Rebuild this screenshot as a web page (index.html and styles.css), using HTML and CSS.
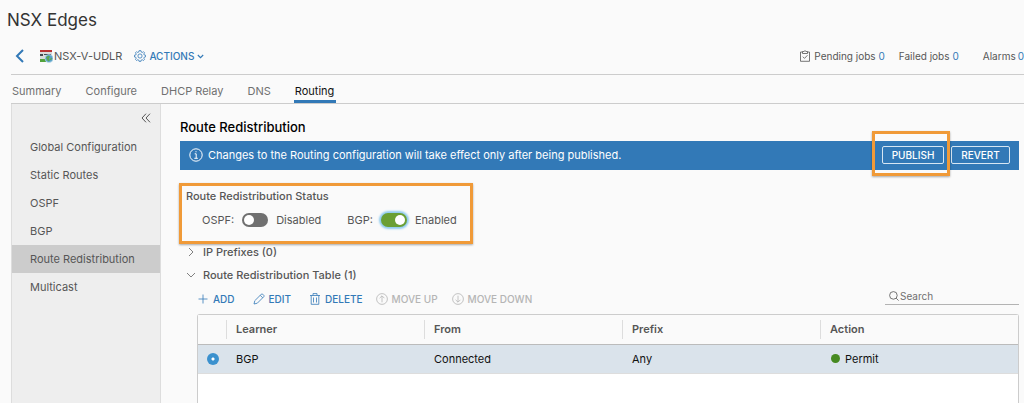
FILE: index.html
```html
<!DOCTYPE html>
<html lang="en">
<head>
<meta charset="utf-8">
<meta name="viewport" content="width=device-width, initial-scale=1">
<title>NSX Edges</title>
<link rel="stylesheet" href="styles.css">
</head>
<body>
<h1 class="page-title">NSX Edges</h1>
<div class="page">
  <header class="object-bar">
    <button class="back" type="button" aria-label="Back"><svg class="icon-back" viewBox="0 0 10 14"><path d="M8 1 2 7l6 6"/></svg></button>
    <svg class="icon-edge" viewBox="0 0 14 14" aria-hidden="true">
      <path fill="#d9dcdc" d="M1 1h12v11H1z"/>
      <path fill="#b93232" d="M1 1h12v2H1z"/>
      <path fill="#444b50" d="M1 5h3v2H1zM5 5h7v1H5z"/>
      <path fill="#53a33c" d="M1 10h6v3H1z"/>
      <circle cx="10" cy="9.5" r="4" fill="#5aa2cf" stroke="#c8e0eb" stroke-width=".6"/>
      <path fill="#5da553" d="m7 8.5 2-2 2 1-1 2 1 2-2 1-1-2zM12 8.5l1 1-1 2-1-1z"/>
    </svg>
    <span class="object-name">NSX-V-UDLR</span>
    <button class="actions" type="button">
      <svg class="icon icon-gear" viewBox="0 0 12 12"><path d="M5 .7h2l.3 1.4 1 .4 1.2-.8 1 1-.7 1.3.4 1 1.3.2v1.7l-1.3.3-.4 1 .7 1.2-1 1.1-1.3-.8-1 .4L7 11.3H5l-.2-1.2-1-.4-1.3.8-1-1.1.7-1.2-.4-1L.5 7V5.2L1.8 5l.4-1-.7-1.3 1-1 1.2.8 1-.4z"/><circle cx="6" cy="6" r="2.1"/></svg>
      ACTIONS
      <svg class="icon-caret" viewBox="0 0 6 4"><path d="m.7.7 2.3 2.3L5.3.7"/></svg>
    </button>
    <ul class="jobs">
      <li class="job"><svg class="icon icon-clip" viewBox="0 0 12 12"><path d="M3.5 2H1.5v9.3h9V2h-2M3.5 3.5v-2H5Q6-.3 7 1.5h1.5v2zM3.8 6.7l1.7 1.7 3-3.2"/></svg><span>Pending jobs <a href="#pending">0</a></span></li>
      <li class="job">Failed jobs <a href="#failed">0</a></li>
      <li class="job job-last">Alarms <a href="#alarms">0</a></li>
    </ul>
  </header>
  <nav class="tabs" aria-label="Edge">
    <a class="tab" href="#summary">Summary</a>
    <a class="tab" href="#configure">Configure</a>
    <a class="tab" href="#dhcp">DHCP Relay</a>
    <a class="tab" href="#dns">DNS</a>
    <a class="tab tab-active" href="#routing" aria-current="page">Routing</a>
  </nav>
  <div class="body">
    <nav class="sidebar" aria-label="Routing">
      <button class="collapse" type="button" aria-label="Collapse"><svg class="icon-collapse" viewBox="0 0 10 10"><path d="M5 .7 1 5l4 4.3M9 .7 5 5l4 4.3"/></svg></button>
      <a class="side-link" href="#global">Global Configuration</a>
      <a class="side-link" href="#static">Static Routes</a>
      <a class="side-link" href="#ospf">OSPF</a>
      <a class="side-link" href="#bgp">BGP</a>
      <a class="side-link side-active" href="#redistribution" aria-current="page">Route Redistribution</a>
      <a class="side-link" href="#multicast">Multicast</a>
    </nav>
    <main class="content">
      <h2 class="heading">Route Redistribution</h2>
      <div class="banner">
        <svg class="icon-info" viewBox="0 0 14 14"><circle cx="7" cy="7" r="6.2"/><path d="M5.7 5.8h1.5v4.4M5.3 10.3h3.5M7 3.2v1.1"/></svg>
        <span class="banner-text">Changes to the Routing configuration will take effect only after being published.</span>
        <span class="callout-wrap"><button class="banner-btn" type="button">PUBLISH</button><span class="callout"></span></span>
        <button class="banner-btn banner-revert" type="button">REVERT</button>
      </div>
      <section class="status">
        <h3 class="status-title">Route Redistribution Status</h3>
        <div class="switches">
          <label class="switch">OSPF:<input class="toggle" type="checkbox" role="switch"><span>Disabled</span></label>
          <label class="switch">BGP:<input class="toggle toggle-focus" type="checkbox" role="switch" checked><span>Enabled</span></label>
        </div>
      </section>
      <button class="fold" type="button" aria-expanded="false"><svg class="icon-fold" viewBox="0 0 10 10"><path d="m3 1 4 4-4 4"/></svg>IP Prefixes (0)</button>
      <button class="fold" type="button" aria-expanded="true"><svg class="icon-fold" viewBox="0 0 10 10"><path d="m1 3 4 4 4-4"/></svg>Route Redistribution Table (1)</button>
      <div class="panel">
        <div class="toolbar">
          <div class="edit-tools">
            <button class="tool" type="button"><svg class="icon" viewBox="0 0 12 12"><path d="M6 1.5v9M1.5 6h9"/></svg>ADD</button>
            <button class="tool" type="button"><svg class="icon" viewBox="0 0 12 12"><path d="m1 11 .8-3.3 6.5-6.5q.7-.6 1.4 0l1.1 1.1q.6.7 0 1.4L4.3 10.2zM7.2 2.3l2.5 2.5"/></svg>EDIT</button>
            <button class="tool" type="button"><svg class="icon" viewBox="0 0 12 12"><path d="M1 2.5h10M4 2.3V.6h4v1.7M2.2 2.5v8.8h7.6V2.5M4.5 4.5v5M7.5 4.5v5"/></svg>DELETE</button>
          </div>
          <div class="move-tools">
            <button class="tool" type="button" disabled><svg class="icon" viewBox="0 0 12 12"><circle cx="6" cy="6" r="5.4"/><path d="M6 9.3V3M3.6 5.2 6 2.8l2.4 2.4"/></svg>MOVE UP</button>
            <button class="tool" type="button" disabled><svg class="icon" viewBox="0 0 12 12"><circle cx="6" cy="6" r="5.4"/><path d="M6 2.7V9M3.6 6.8 6 9.2l2.4-2.4"/></svg>MOVE DOWN</button>
          </div>
          <label class="search"><svg class="icon-search" viewBox="0 0 10 10"><circle cx="4.4" cy="4.4" r="3.8"/><path d="m7.2 7.2 2.4 2.4"/></svg><input class="search-input" type="text" placeholder="Search" aria-label="Search"></label>
        </div>
        <div class="grid">
          <table class="table">
            <colgroup><col class="col-pick"><col><col><col><col></colgroup>
            <thead><tr><th></th><th>Learner</th><th>From</th><th>Prefix</th><th>Action</th></tr></thead>
            <tbody><tr><td class="pick"><input class="radio" type="radio" name="route" aria-label="BGP" checked></td><td>BGP</td><td>Connected</td><td>Any</td><td><span class="permit">Permit</span></td></tr></tbody>
          </table>
        </div>
      </div>
    </main>
  </div>
</div>
</body>
</html>
```
FILE: styles.css
```css
* { box-sizing: border-box; }
body {
  margin: 0;
  height: 100vh;
  display: flex;
  flex-direction: column;
  overflow: hidden;
  background: #fafafa;
  color: #565656;
  font: 11px/16px Inter, "Liberation Sans", sans-serif;
}
button, input { font: inherit; color: inherit; margin: 0; }
button { padding: 0; border: 0; background: none; white-space: nowrap; }
a { color: #3279b7; text-decoration: none; }
svg { flex: none; fill: none; stroke: currentColor; }
h1, h2, h3 { margin: 0; }

.page-title { padding: 8px 7px 7px; font-size: 17px; line-height: 24px; font-weight: 400; color: #333; }
.page { flex: 1; display: flex; flex-direction: column; min-height: 0; padding-left: 11px; }
.icon { width: 12px; height: 12px; stroke-width: .8; }

.object-bar { display: flex; align-items: center; height: 36px; padding-bottom: 1px; border-bottom: 1px solid #ccc; white-space: nowrap; }
.back { display: flex; margin: 0 14px 0 4px; color: #3279b7; }
.icon-back { width: 10px; height: 14px; stroke-width: 2; }
.icon-edge { width: 14px; height: 14px; stroke: none; }
.object-name { margin-left: 1px; }
.actions { display: flex; align-items: center; gap: 3px; margin-left: 12px; color: #3279b7; font-size: 10px; font-weight: 500; }
.icon-caret { width: 7px; height: 5px; }
.jobs { display: flex; gap: 14px; margin: 0 0 0 auto; padding: 0; list-style: none; font-size: 10px; }
.job { display: flex; align-items: center; gap: 3px; }
.job-last { gap: 2px; margin-left: 10px; }

.tabs { display: flex; flex: none; gap: 21px; height: 29px; padding-right: 5px; border-bottom: 1px solid #ccc; }
.tab { padding: 7px 2px 0 1px; line-height: 18px; color: #707070; }
.tab-active { color: #111; border-bottom: 3px solid #3279b7; }

.body { flex: 1; display: flex; min-height: 0; }
.sidebar { flex: none; width: 150px; display: flex; flex-direction: column; background: #eee; border: solid #ddd; border-width: 0 1px; }
.collapse { display: flex; align-self: flex-end; margin: 9px 9px 10px 0; }
.icon-collapse { width: 10px; height: 10px; }
.side-link { padding: 0 18px; line-height: 28px; color: #565656; white-space: nowrap; }
.side-active { background: #ccc; }
.content { flex: 1; min-width: 0; display: flex; flex-direction: column; padding: 14px 5px 0 19px; }
.heading { margin-bottom: 5px; font-size: 13px; line-height: 18px; font-weight: 500; color: #000; }

.banner { display: flex; flex: none; align-items: center; height: 29px; padding: 0 9px 1px; background: #3279b7; color: #fff; }
.icon-info { width: 14px; height: 14px; margin-right: 5px; }
.banner-text { flex: 1; white-space: nowrap; }
.callout-wrap { position: relative; display: flex; }
.callout { position: absolute; inset: -15px -6px -12px -10px; border: 3px solid #f09a38; box-shadow: 0 1px 2px #0005; pointer-events: none; }
.banner-btn { width: 62px; height: 18px; border: 1px solid #d6e6f3; border-radius: 2px; font-size: 10px; font-weight: 500; }
.banner-revert { width: 59px; margin-left: 7px; }

.status { align-self: flex-start; width: 294px; height: 61px; margin: 13px 0 0 -1px; padding: 2px 4px; border: 3px solid #f09a38; box-shadow: 0 1px 2px #0005; }
.status-title { font-size: 11px; line-height: 16px; font-weight: 500; }
.switches { display: flex; gap: 26px; padding: 8px 0 0 16px; }
.switch { display: flex; align-items: center; gap: 8px; }
.toggle { appearance: none; display: flex; width: 26px; height: 14px; padding: 2px; border-radius: 7px; background: #707070; }
.toggle::before { content: ""; width: 10px; height: 10px; border-radius: 50%; background: #fff; }
.toggle:checked { justify-content: flex-end; background: #6a9f34; }
.toggle-focus { box-shadow: 0 0 2px 2px #8fcbee; }

.fold { display: flex; align-items: center; align-self: flex-start; gap: 7px; height: 23px; margin-left: 6px; font-weight: 500; }
.status + .fold { margin-top: -4px; }
.icon-fold { width: 10px; height: 10px; color: #808080; }

.panel { flex: 1; display: flex; flex-direction: column; min-height: 0; padding-left: 17px; }
.toolbar { display: flex; align-items: center; height: 28px; gap: 13px; padding-bottom: 2px; font-size: 10px; font-weight: 500; }
.edit-tools { display: flex; gap: 18px; }
.move-tools { display: flex; gap: 14px; }
.tool { display: flex; align-items: center; gap: 4px; color: #3279b7; }
.tool:disabled { color: #b5b5b5; }
.search { display: flex; align-items: center; gap: 1px; width: 134px; height: 18px; margin: 0 0 6px auto; padding: 0 4px; border-bottom: 1px solid #b3b3b3; }
.icon-search { width: 10px; height: 10px; stroke-width: .8; }
.search-input { width: 100%; min-width: 0; padding: 0; border: 0; outline: 0; background: none; font-size: 10px; font-weight: 400; }
.search-input::placeholder { color: #707070; opacity: 1; }

.grid { flex: 1; background: #fff; border: 1px solid #ccc; border-bottom: 0; border-radius: 3px 3px 0 0; }
.table { width: 100%; table-layout: fixed; border-collapse: collapse; }
.col-pick { width: 28px; }
.table th, .table td { height: 29px; padding: 0 0 0 10px; text-align: left; }
.table th { font-weight: 600; background: #fafafa linear-gradient(#ddd, #ddd) 0 5px / 1px 19px no-repeat; border-bottom: 1px solid #bbb; }
.table th:first-child { background-image: none; }
.table td { background: #dae3eb; color: #111; border-bottom: 1px solid #ddd; }
.table .pick { padding: 0 0 0 9px; }
.radio { appearance: none; display: block; width: 12px; height: 12px; border-radius: 50%; background: radial-gradient(#fff 1px, #3b91ce 2px); }
.permit { display: flex; align-items: center; gap: 5px; padding-left: 1px; }
.permit::before { content: ""; width: 9px; height: 9px; border-radius: 50%; background: #468a21; }
```
